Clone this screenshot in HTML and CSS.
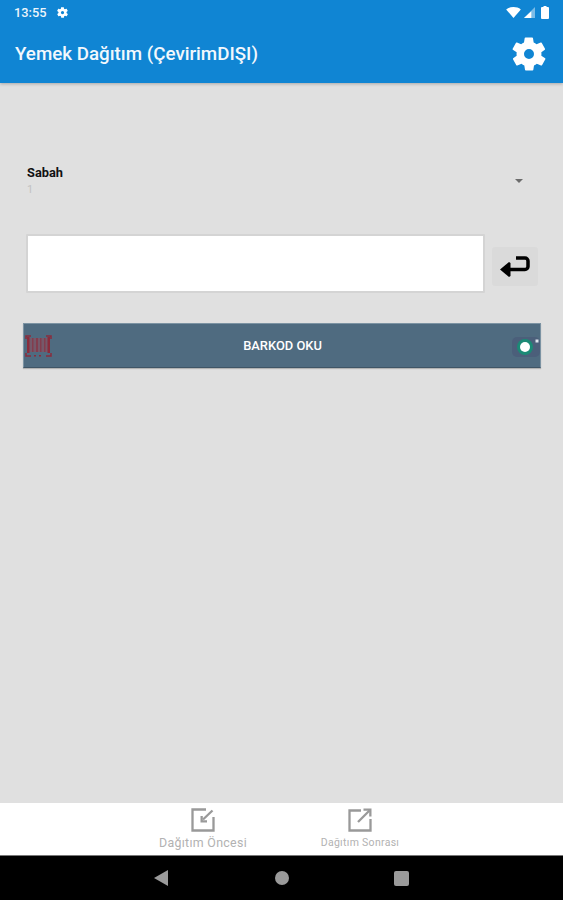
FILE: index.html
```html
<!DOCTYPE html>
<html lang="tr">
<head>
<meta charset="utf-8">
<title>Yemek Dağıtım</title>
<link rel="stylesheet" href="styles.css">
</head>
<body>
<div class="screen">
  <header class="appbar">
    <div class="status">
      <span class="time">13:55</span>
      <svg class="status-gear" viewBox="0 0 24 24"><path fill="#fff" fill-rule="evenodd" d="M19.4 13a7.5 7.5 0 0 0 0-2l2.1-1.6a.5.5 0 0 0 .1-.6l-2-3.5a.5.5 0 0 0-.6-.2l-2.5 1a7.3 7.3 0 0 0-1.7-1l-.4-2.6a.5.5 0 0 0-.5-.4h-4a.5.5 0 0 0-.5.4l-.4 2.6a7.3 7.3 0 0 0-1.7 1l-2.5-1a.5.5 0 0 0-.6.2l-2 3.5a.5.5 0 0 0 .1.6L4.6 11a7.5 7.5 0 0 0 0 2l-2.1 1.6a.5.5 0 0 0-.1.6l2 3.5c.1.2.4.3.6.2l2.5-1c.5.4 1.100.7 1.700 1l.4 2.600c0 .2.2.4.5.4h4c.3 0 .5-.2.5-.4l.4-2.600c.6-.3 1.200-.6 1.700-1l2.500 1c.2.1.5 0 .6-.2l2-3.500a.5.5 0 0 0-.1-.6zM12 15a3 3 0 1 1 0-6 3 3 0 0 1 0 6z"/></svg>
      <span class="status-right">
        <svg class="wifi" viewBox="0 0 16 12"><path fill="#fff" d="M0 2.600C2.200.9 5 0 8 0s5.800.9 8 2.600L8 12z"/></svg>
        <svg class="signal" viewBox="0 0 12 12"><path fill="#fff" fill-opacity=".45" d="M12 0v12H0z"/><path fill="#fff" d="M8 4.500V12H0z"/></svg>
        <svg class="battery" viewBox="0 0 8 13"><path fill="#fff" d="M2.500 0h3v1H7a1 1 0 0 1 1 1v10a1 1 0 0 1-1 1H1a1 1 0 0 1-1-1V2a1 1 0 0 1 1-1h1.500z"/></svg>
      </span>
    </div>
    <div class="titlebar">
      <h1 class="title">Yemek Dağıtım (ÇevirimDIŞI)</h1>
      <svg class="settings" viewBox="0 0 24 24"><path fill="#fff" fill-rule="evenodd" d="M19.4 13a7.5 7.5 0 0 0 0-2l2.1-1.6a.5.5 0 0 0 .1-.6l-2-3.5a.5.5 0 0 0-.6-.2l-2.5 1a7.3 7.3 0 0 0-1.7-1l-.4-2.6a.5.5 0 0 0-.5-.4h-4a.5.5 0 0 0-.5.4l-.4 2.6a7.3 7.3 0 0 0-1.7 1l-2.5-1a.5.5 0 0 0-.6.2l-2 3.5a.5.5 0 0 0 .1.6L4.6 11a7.5 7.5 0 0 0 0 2l-2.100 1.600a.5.5 0 0 0-.1.6l2 3.500c.1.2.4.3.6.2l2.500-1c.5.4 1.100.7 1.700 1l.4 2.600c0 .2.2.4.5.4h4c.3 0 .5-.2.5-.4l.4-2.600c.6-.3 1.200-.6 1.700-1l2.500 1c.2.1.5 0 .6-.2l2-3.500a.5.5 0 0 0-.1-.6zM12 15a3 3 0 1 1 0-6 3 3 0 0 1 0 6z"/></svg>
    </div>
  </header>

  <main class="content">
    <div class="spinner">
      <div class="spinner-text">
        <div class="spinner-label">Sabah</div>
        <div class="spinner-value">1</div>
      </div>
      <span class="spinner-arrow"></span>
    </div>

    <div class="entry">
      <div class="field"></div>
      <div class="enter-btn">
        <svg class="enter-icon" viewBox="0 0 31 22"><path fill="none" stroke="#000" stroke-width="3.500" d="M7 13.500h18a3 3 0 0 0 3-3V5a3 3 0 0 0-3-3H16"/><path fill="#000" d="M0 13.500L9 6l1.500 1v13L9 21z"/></svg>
      </div>
    </div>

    <div class="scan-bar">
      <svg class="barcode" viewBox="0 0 27 24">
        <rect x="3" y="4" width="21" height="14" fill="#75596a"/>
        <g fill="none" stroke="#8a2c3c" stroke-width="1.500">
          <path d="M1 5V2h5M26 5V2h-5M1 19v3h5M26 19v3h-5"/>
        </g>
        <g fill="#8a2c3c">
          <rect x="2" y="3" width="2.500" height="16"/><rect x="7" y="4" width="1.500" height="14" fill-opacity=".6"/><rect x="11" y="4" width="2" height="14" fill-opacity=".6"/><rect x="15" y="4" width="1.500" height="14" fill-opacity=".6"/><rect x="19" y="4" width="1.500" height="14" fill-opacity=".6"/><rect x="22.500" y="3" width="2.500" height="16"/>
          <rect x="9" y="21" width="2" height="1.500"/><rect x="14" y="21" width="2" height="1.500"/>
        </g>
      </svg>
      <span class="scan-label">BARKOD OKU</span>
      <svg class="camera" viewBox="0 0 32 24">
        <rect x="4" y="3" width="28" height="20" rx="5" fill="#4b5f7a"/>
        <circle cx="17" cy="13" r="8" fill="#1b8a76"/>
        <circle cx="17" cy="13" r="5" fill="#fff"/>
        <rect x="27.500" y="5.500" width="3" height="3" fill="#dfe6ee"/>
      </svg>
    </div>
  </main>

  <nav class="tabs">
    <div class="tab">
      <svg class="tab-icon" viewBox="0 0 24 24"><path fill="none" stroke="#999" stroke-width="2.300" d="M15 1.500H1.500v21h21V9"/><path fill="none" stroke="#999" stroke-width="2.300" d="M21.500 2.500L12 11.500"/><path fill="#999" d="M9.500 8v6.500H16v-2.300h-4.200V8z"/></svg>
      <span class="tab-label">Dağıtım Öncesi</span>
    </div>
    <div class="tab tab-second">
      <svg class="tab-icon" viewBox="0 0 24 24"><path fill="none" stroke="#999" stroke-width="2.300" d="M13 2.500H1.500v20h21V11"/><path fill="none" stroke="#999" stroke-width="2.300" d="M10 14L21.500 2.500"/><path fill="#999" d="M15.500 .5H23.500V8.500h-2.300V2.800h-5.700z"/></svg>
      <span class="tab-label tab-label-small">Dağıtım Sonrası</span>
    </div>
  </nav>

  <footer class="sysnav">
    <svg class="nav-back" viewBox="0 0 14 16"><path fill="#9a9a9a" d="M14 0v16L0 8z"/></svg>
    <span class="nav-home"></span>
    <span class="nav-recent"></span>
  </footer>
</div>
</body>
</html>
```
FILE: styles.css
```css
* { box-sizing: border-box; }
html, body { margin: 0; padding: 0; }
body { font-family: Roboto, "Liberation Sans", sans-serif; background: #000; }

.screen { width: 563px; height: 900px; display: flex; flex-direction: column; overflow: hidden; background: #e0e0e0; }

.appbar { height: 83px; flex: none; background: #1085d3; color: #fff; box-shadow: 0 1px 3px rgba(0,0,0,.25); position: relative; }
.status { height: 24px; display: flex; align-items: center; padding: 0 14px; }
.time { font-size: 12.800px; font-weight: 500; opacity: .92; }
.status-gear { width: 13px; height: 13px; margin-left: 10px; }
.status-right { margin-left: auto; display: flex; align-items: center; gap: 3px; }
.wifi { width: 15px; height: 11px; }
.signal { width: 11px; height: 11px; }
.battery { width: 8px; height: 13px; margin-left: 3px; }

.titlebar { height: 59px; display: flex; align-items: center; padding: 0 14px 0 15px; justify-content: space-between; }
.title { margin: 0; font-size: 18.750px; font-weight: 500; color: #f2f8fd; }
.settings { width: 40px; height: 40px; }

.content { flex: 1; display: flex; flex-direction: column; padding: 80px 22px 0 23px; }

.spinner { height: 36px; display: flex; align-items: center; padding: 0 18px 0 4px; justify-content: space-between; }
.spinner-text { align-self: flex-start; margin-top: 3px; }
.spinner-label { font-size: 12.800px; font-weight: 700; color: #111; line-height: 14px; }
.spinner-value { font-size: 11px; color: #c2c2c2; line-height: 16px; margin-top: 2px; }
.spinner-arrow { width: 0; height: 0; border-left: 4.500px solid transparent; border-right: 4.500px solid transparent; border-top: 4.500px solid #6c6c6c; }

.entry { display: flex; align-items: flex-end; margin-top: 35px; padding-left: 3px; }
.field { width: 459px; height: 59px; background: #fff; border: 2px solid #d4d4d4; border-radius: 1px; }
.enter-btn { width: 46px; height: 39px; margin: 0 0 7px 7px; background: #dadada; border-radius: 3px; display: flex; align-items: center; justify-content: center; }
.enter-icon { width: 31px; height: 22px; }

.scan-bar { width: 518px; height: 45px; margin-top: 30px; background: #4f6b80; border: 1px solid #7c93a3; border-bottom-color: #3f5566; box-shadow: 0 1px 1px rgba(0,0,0,.2); display: flex; align-items: center; justify-content: space-between; }
.barcode { width: 27px; height: 24px; margin-left: 1px; }
.scan-label { font-size: 12.900px; font-weight: 500; color: #fff; margin-left: 5px; }
.camera { width: 32px; height: 24px; }

.tabs { height: 53px; flex: none; background: #fff; display: flex; padding-left: 158px; border-bottom: 1px solid #777; }
.tab { display: flex; flex-direction: column; align-items: center; width: 90px; padding-top: 5px; }
.tab-second { margin-left: 72px; width: 80px; }
.tab-icon { width: 24px; height: 24px; }
.tab-label { font-size: 12.400px; color: #b2b2b2; margin-top: 3px; letter-spacing: .3px; white-space: nowrap; }
.tab-label-small { font-size: 10.500px; margin-top: 4px; }

.sysnav { height: 44px; flex: none; background: #000; display: flex; align-items: center; padding-left: 154px; }
.nav-back { width: 14px; height: 16px; }
.nav-home { width: 14px; height: 14px; border-radius: 50%; background: #9a9a9a; margin-left: 107px; }
.nav-recent { width: 15px; height: 15px; border-radius: 2px; background: #9a9a9a; margin-left: 105px; }
```
